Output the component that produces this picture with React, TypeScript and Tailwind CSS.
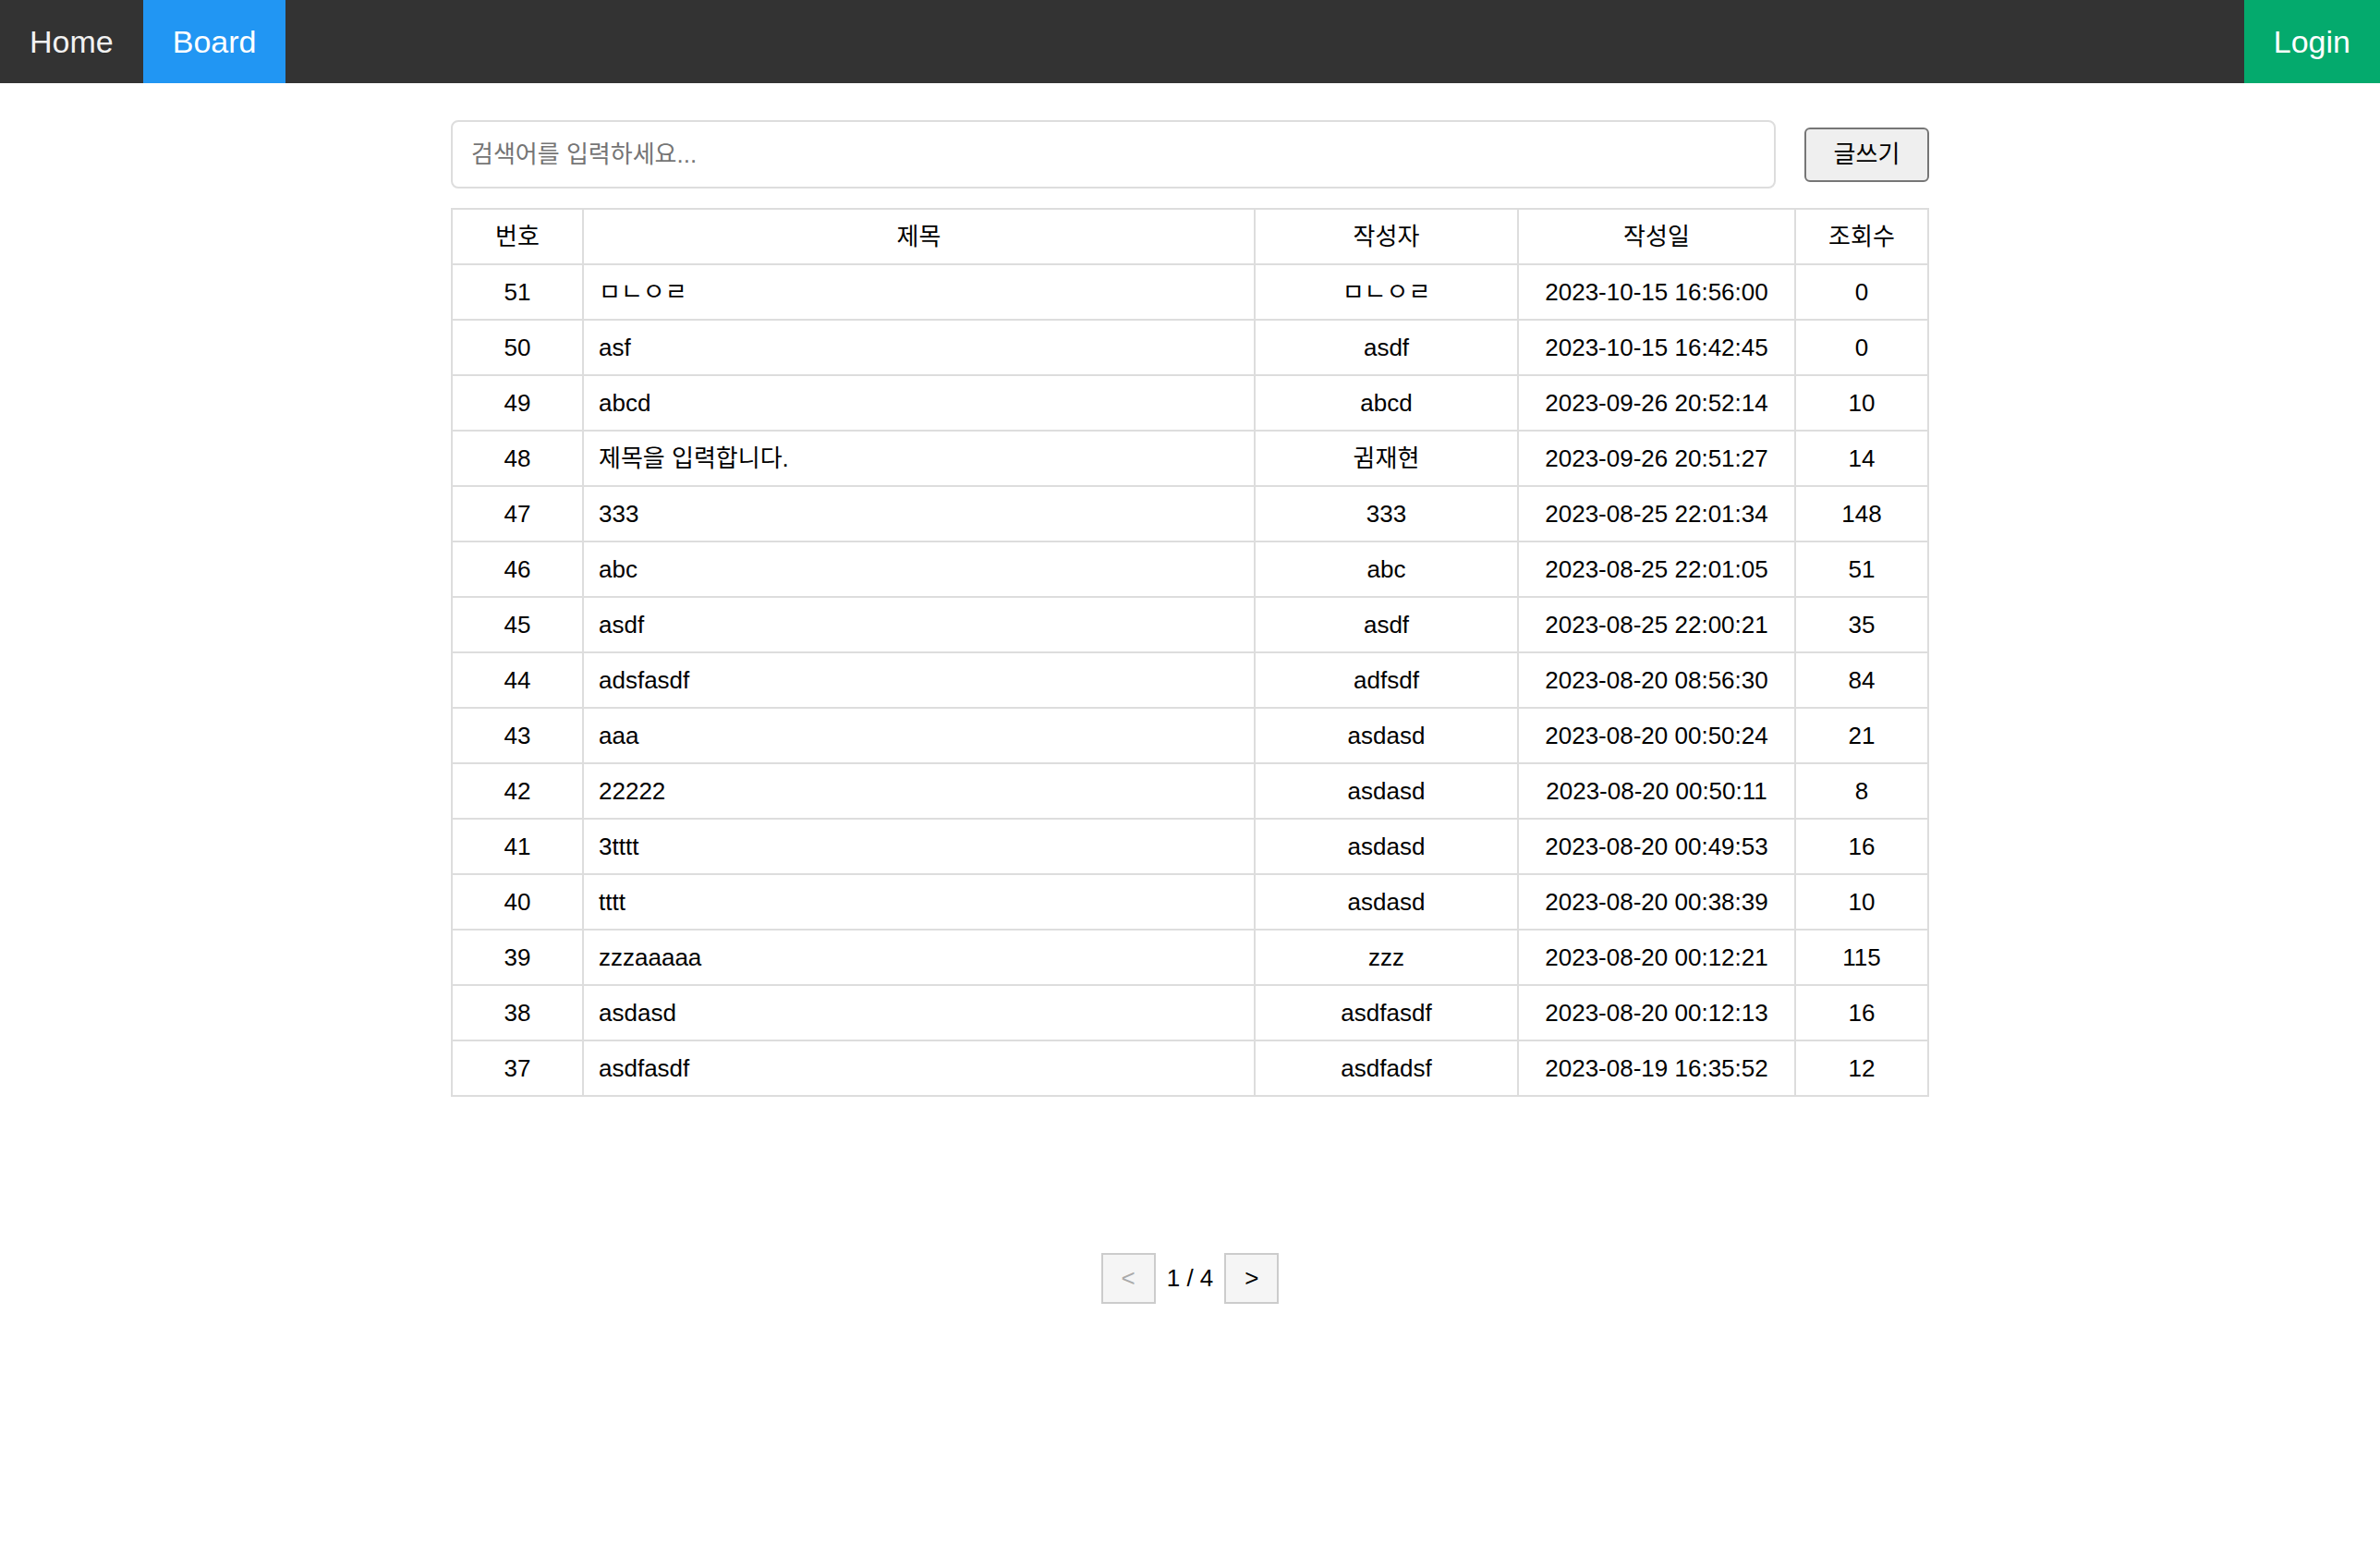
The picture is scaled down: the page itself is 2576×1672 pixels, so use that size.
import React, { useState } from 'react';

type Post = {
  id: number;
  title: string;
  writer: string;
  createdAt: string;
  views: number;
};

const posts: Post[] = [
  { id: 51, title: 'ㅁㄴㅇㄹ', writer: 'ㅁㄴㅇㄹ', createdAt: '2023-10-15 16:56:00', views: 0 },
  { id: 50, title: 'asf', writer: 'asdf', createdAt: '2023-10-15 16:42:45', views: 0 },
  { id: 49, title: 'abcd', writer: 'abcd', createdAt: '2023-09-26 20:52:14', views: 10 },
  { id: 48, title: '제목을 입력합니다.', writer: '귐재현', createdAt: '2023-09-26 20:51:27', views: 14 },
  { id: 47, title: '333', writer: '333', createdAt: '2023-08-25 22:01:34', views: 148 },
  { id: 46, title: 'abc', writer: 'abc', createdAt: '2023-08-25 22:01:05', views: 51 },
  { id: 45, title: 'asdf', writer: 'asdf', createdAt: '2023-08-25 22:00:21', views: 35 },
  { id: 44, title: 'adsfasdf', writer: 'adfsdf', createdAt: '2023-08-20 08:56:30', views: 84 },
  { id: 43, title: 'aaa', writer: 'asdasd', createdAt: '2023-08-20 00:50:24', views: 21 },
  { id: 42, title: '22222', writer: 'asdasd', createdAt: '2023-08-20 00:50:11', views: 8 },
  { id: 41, title: '3tttt', writer: 'asdasd', createdAt: '2023-08-20 00:49:53', views: 16 },
  { id: 40, title: 'tttt', writer: 'asdasd', createdAt: '2023-08-20 00:38:39', views: 10 },
  { id: 39, title: 'zzzaaaaa', writer: 'zzz', createdAt: '2023-08-20 00:12:21', views: 115 },
  { id: 38, title: 'asdasd', writer: 'asdfasdf', createdAt: '2023-08-20 00:12:13', views: 16 },
  { id: 37, title: 'asdfasdf', writer: 'asdfadsf', createdAt: '2023-08-19 16:35:52', views: 12 },
];

const App: React.FC = () => {
  const [keyword, setKeyword] = useState('');

  return (
    <div className="min-h-screen bg-white text-black font-['Liberation_Sans',Arial,'Noto_Sans_CJK_KR',sans-serif]">
      {/* Top navigation */}
      <nav className="flex h-[90px] bg-[#333333]">
        <a className="flex items-center px-[32px] text-[34px] text-[#f2f2f2]">Home</a>
        <a className="flex items-center bg-[#2196f3] px-[32px] text-[34px] text-white">Board</a>
        <a className="ml-auto flex items-center bg-[#04aa6d] px-[32px] text-[34px] text-white">Login</a>
      </nav>

      <main className="mx-auto w-[1600px] pt-[40px]">
        {/* Search and write */}
        <div className="flex items-center gap-[31px]">
          <input
            type="text"
            placeholder="검색어를 입력하세요..."
            className="h-[74px] flex-1 rounded-[8px] border-2 border-[#dddddd] px-[20px] text-[26px] placeholder:text-[#757575] focus:outline-none"
            value={keyword}
            onChange={(e) => setKeyword(e.target.value)}
          />
          <button className="h-[59px] w-[135px] rounded-[6px] border-2 border-[#767676] bg-[#efefef] text-[26px] text-black">
            글쓰기
          </button>
        </div>

        {/* Post table */}
        <table className="mt-[21px] w-full table-fixed border-collapse text-[26px]">
          <colgroup>
            <col className="w-[142px]" />
            <col className="w-[727px]" />
            <col className="w-[285px]" />
            <col className="w-[300px]" />
            <col />
          </colgroup>
          <thead>
            <tr className="h-[60px]">
              <th className="border-2 border-[#dddddd] font-normal">번호</th>
              <th className="border-2 border-[#dddddd] font-normal">제목</th>
              <th className="border-2 border-[#dddddd] font-normal">작성자</th>
              <th className="border-2 border-[#dddddd] font-normal">작성일</th>
              <th className="border-2 border-[#dddddd] font-normal">조회수</th>
            </tr>
          </thead>
          <tbody>
            {posts.map((post) => (
              <tr key={post.id} className="h-[60px]">
                <td className="border-2 border-[#dddddd] text-center">{post.id}</td>
                <td className="border-2 border-[#dddddd] px-[16px] text-left">{post.title}</td>
                <td className="border-2 border-[#dddddd] text-center">{post.writer}</td>
                <td className="border-2 border-[#dddddd] text-center">{post.createdAt}</td>
                <td className="border-2 border-[#dddddd] text-center">{post.views}</td>
              </tr>
            ))}
          </tbody>
        </table>

        {/* Pagination */}
        <div className="mt-[169px] flex items-center justify-center text-[26px]">
          <button className="h-[55px] w-[59px] border-2 border-[#cccccc] bg-[#f5f5f5] text-[#aaaaaa]">&lt;</button>
          <span className="mx-[12px]">1 / 4</span>
          <button className="h-[55px] w-[59px] border-2 border-[#cccccc] bg-[#f5f5f5] text-black">&gt;</button>
        </div>
      </main>
    </div>
  );
};

export default App;
